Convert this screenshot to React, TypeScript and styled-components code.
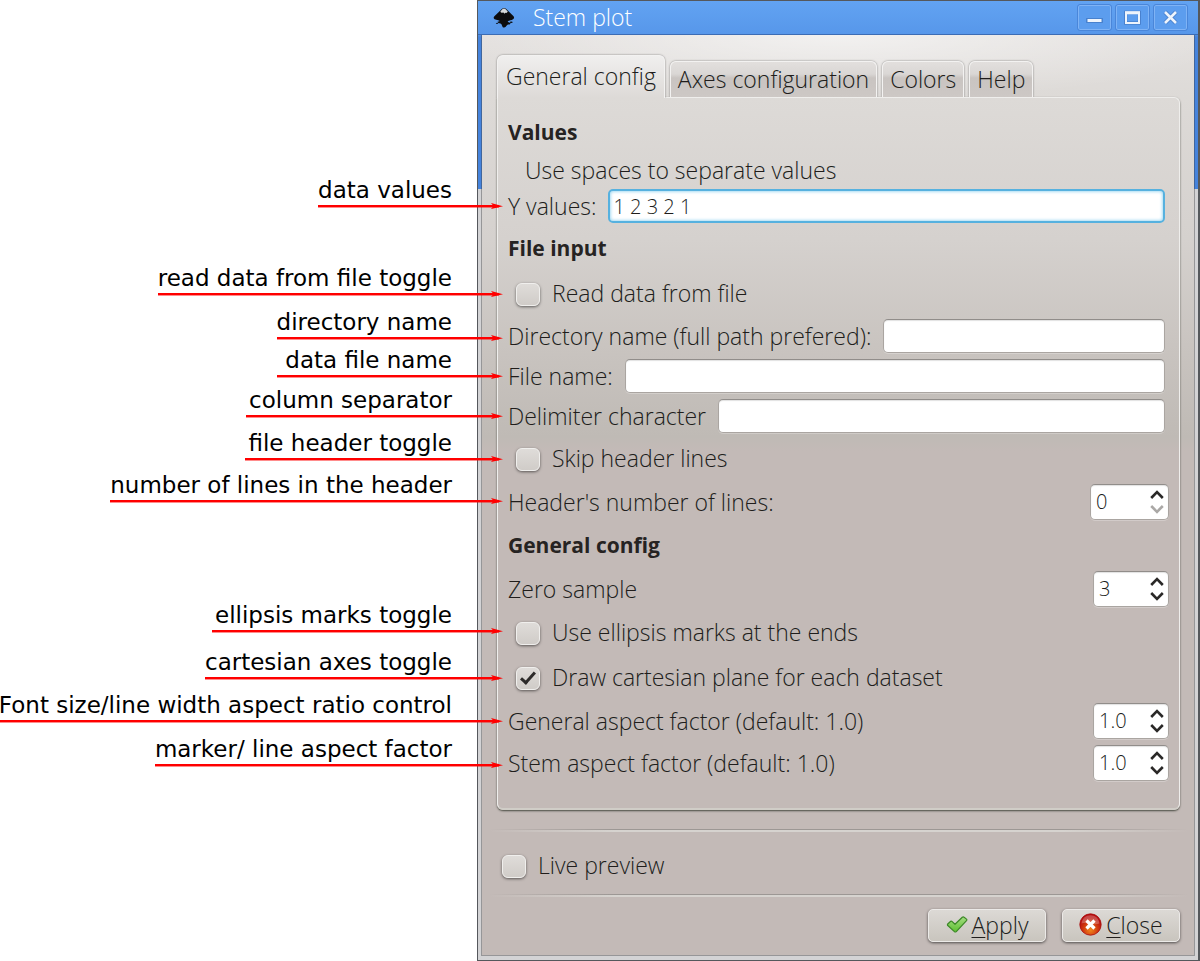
import React from "react";
import styled, { createGlobalStyle, css } from "styled-components";

const GlobalStyle = createGlobalStyle`
  *, *::before, *::after { box-sizing: border-box; }
  body { margin: 0; background: #fff; }
  button, input { font: inherit; color: inherit; }
`;

const uiFont = `"Open Sans", "Noto Sans", sans-serif`;

/* ---------- page ---------- */

const Page = styled.main`
  display: grid;
  grid-template-columns: minmax(0, 477fr) minmax(0, 723fr);
  align-items: start;
`;

/* ---------- callouts ---------- */

const Callouts = styled.ul`
  position: relative;
  z-index: 1;
  display: flex;
  flex-direction: column;
  align-items: flex-end;
  margin: 0 -26px 0 0;
  padding: 177px 0 0;
  list-style: none;
  pointer-events: none;
`;

const Callout = styled.li<{ $before: number }>`
  display: flex;
  flex-direction: column;
  margin-top: ${(p) => p.$before}px;
  font: 23px/26px "DejaVu Sans", sans-serif;
  color: #000;
  white-space: nowrap;
`;

const CalloutText = styled.span<{ $lead: number }>`
  padding: 0 51px 0 ${(p) => p.$lead}px;
`;

const ArrowLine = styled.span`
  display: flex;
  align-items: center;
  height: 6px;

  &::before {
    content: "";
    flex: 1;
    height: 2px;
    margin-right: -8px;
    background: #f00;
    box-shadow: 0 1px 0 rgba(255, 0, 0, 0.45);
  }
`;

/* ---------- window ---------- */

const Window = styled.section`
  border: 1px solid #55585c;
  border-right-width: 2px;
  padding: 0 3px 4px;
  background: linear-gradient(#62a3f2 0, #5797ea 33px, #4583dc 36px, #4583dc 188px, #d3d3d5 188px);
  font: 300 23px/26px ${uiFont};
  color: #201d1b;
`;

const TitleBar = styled.header`
  display: flex;
  align-items: center;
  gap: 5px;
  height: 34px;
  padding: 0 11px 0 15px;
  border-bottom: 1px solid #3c6cb4;
  margin: 0 -3px;
  color: #fff;
`;

const Title = styled.h1`
  flex: 1;
  margin: 0;
  padding: 0 0 2px 13px;
  font-size: 23px;
  font-weight: 300;
  line-height: 26px;
`;

const WindowButton = styled.button`
  display: grid;
  place-items: center;
  width: 33px;
  height: 25px;
  padding: 0;
  border: 1px solid #7fb3f5;
  border-radius: 2px;
  outline: 1px solid #4a86d9;
  background: #5c9dee;
  color: #eef4fc;
`;

const Body = styled.div`
  padding: 20px 14px 13px 15px;
  border: solid rgba(60, 60, 60, 0.4);
  border-width: 0 1px 1px;
  background:
    radial-gradient(ellipse 400px 66px at 50% 0, rgba(255, 255, 255, 0.55), rgba(255, 255, 255, 0)),
    linear-gradient(#e3e0de 0, #dddad7 62px, #d5d1ce 205px, #c9c4c0 310px, #bfbab5 402px, #c3bab7 416px);
  background-clip: padding-box;
`;

/* ---------- tabs ---------- */

const TabList = styled.div`
  position: relative;
  display: flex;
  align-items: flex-end;
  gap: 5px;
  height: 42px;
`;

const Tab = styled.button<{ $active?: boolean }>`
  flex: none;
  height: 36px;
  padding: 0 7px;
  border: 1px solid #f3f2f1;
  border-bottom: 0;
  border-radius: 6px 6px 0 0;
  background: linear-gradient(#e2dfdd, #dad7d5 12px, #c9c4c1 16px, #cdc8c5);
  box-shadow: 0 0 2px rgba(0, 0, 0, 0.5);
  clip-path: inset(-3px -3px 0 -3px);
  line-height: 33px;
  white-space: nowrap;

  ${(p) =>
    p.$active &&
    css`
      height: 43px;
      margin-bottom: -1px;
      padding: 0 8px 1px;
      background: linear-gradient(#f0efee, #dddad7);
      z-index: 1;
    `}
`;

const Panel = styled.div`
  display: flex;
  flex-direction: column;
  gap: 6px;
  padding: 15px 10px 27px;
  border: 1px solid #efeeec;
  border-bottom: 2px solid #d0cdc7;
  border-radius: 0 6px 6px 6px;
  box-shadow: 0 1px 2px rgba(40, 45, 35, 0.8);
`;

/* ---------- form ---------- */

const Heading = styled.h2`
  margin: 0;
  font-size: 21px;
  font-weight: 700;
  line-height: 39px;
  color: #262322;
`;

const Hint = styled.p`
  margin: 0;
  padding-left: 17px;
  line-height: 25px;
`;

const CheckRow = styled.label<{ $inset?: boolean }>`
  display: flex;
  align-items: center;
  gap: 12px;
  height: ${(p) => (p.$inset ? 39 : 62)}px;
  padding: ${(p) => (p.$inset ? "0 0 2px 8px" : "4px 0 0 5px")};
`;

const CheckBox = styled.input.attrs({ type: "checkbox" })`
  appearance: none;
  flex: none;
  display: grid;
  place-items: center;
  width: 24px;
  height: 23px;
  margin: 3px 0 0;
  border: 1px solid #f0efed;
  border-radius: 6px;
  background: linear-gradient(#dfdcd9, #d0ccc8);
  box-shadow: 0 1px 3px rgba(0, 0, 0, 0.55);

  &:checked::after {
    content: "";
    width: 8px;
    height: 15px;
    margin-top: -4px;
    border: solid #2d2b2a;
    border-width: 0 3px 3px 0;
    transform: rotate(42deg);
  }
`;

const FieldRow = styled.label`
  display: flex;
  align-items: center;
  justify-content: space-between;
  gap: 12px;
  white-space: nowrap;
`;

const fieldBox = css`
  border: 1px solid #aaa5a1;
  border-top-color: #918d8a;
  border-radius: 5px;
  background: #fff;
  box-shadow: inset 0 1px 1px rgba(0, 0, 0, 0.12), 0 1px 0 rgba(255, 255, 255, 0.25);
`;

const TextInput = styled.input.attrs({ type: "text" })<{ $focused?: boolean }>`
  ${fieldBox}
  flex: 1;
  min-width: 0;
  height: 34px;
  margin-right: 4px;
  padding: 0 3px;
  font-size: 20px;
  outline: 0;

  ${(p) =>
    p.$focused &&
    css`
      border: 2px solid #56b1df;
      box-shadow: inset 0 0 3px 1px #a9dcf3;
    `}
`;

const Spinner = styled.span<{ $wide?: boolean }>`
  ${fieldBox}
  display: flex;
  flex: none;
  width: ${(p) => (p.$wide ? 79 : 76)}px;
  height: 36px;
`;

const SpinInput = styled.input.attrs({ type: "number" })`
  appearance: textfield;
  flex: 1;
  min-width: 0;
  padding: 0 0 0 5px;
  border: 0;
  outline: 0;
  background: none;
  font-size: 20px;

  &::-webkit-inner-spin-button { appearance: none; }
`;

const SpinArrows = styled.span`
  display: flex;
  flex-direction: column;
  justify-content: center;
  gap: 4px;
  padding-right: 4px;
`;

const SpinButton = styled.button`
  display: block;
  padding: 0;
  border: 0;
  background: none;
  line-height: 0;
  color: #2a2827;

  &:disabled { color: #aaa8a6; }
`;

/* ---------- footer ---------- */

const Rule = styled.hr<{ $gap?: boolean }>`
  width: auto;
  height: 3px;
  margin: ${(p) => (p.$gap ? 19 : 0)}px -8px 0;
  border: 0;
  background:
    linear-gradient(90deg, transparent, #9c9794 18%, #9c9794 82%, transparent) 0 0 / 100% 1px no-repeat,
    linear-gradient(90deg, transparent, #d6d3cf 18%, #d6d3cf 82%, transparent) 0 1px / 100% 2px no-repeat;
`;

const Actions = styled.footer`
  display: flex;
  justify-content: flex-end;
  gap: 16px;
  margin-top: 12px;
`;

const ActionButton = styled.button`
  display: flex;
  align-items: center;
  justify-content: center;
  gap: 4px;
  width: 118px;
  height: 33px;
  padding: 0 0 2px;
  border: 1px solid #eceae8;
  border-radius: 5px;
  background: linear-gradient(#dcd9d5, #c9c5be);
  box-shadow: 0 1px 3px rgba(0, 0, 0, 0.6);
`;

const AccessKey = styled.span`
  text-decoration: underline;
  text-decoration-thickness: 1px;
  text-underline-offset: 3px;
`;

/* ---------- icons ---------- */

const InkscapeIcon = () => (
  <svg width="22" height="22" viewBox="0 0 22 22" aria-hidden="true">
    <path
      d="M11 1C9.6 1 8.700 2 7.600 3.200L1.400 9.200C.2 10.600.5 11.900 2.400 12.500L6 13.500C7 13.900 6.400 14.500 5 14.600C4 14.900 4.800 15.900 6.400 16.200C8 16.500 8.700 17.300 9.100 18.700C9.500 20.600 11.300 21.200 12.800 19.800C13.400 19 14 17.900 15.400 17.600C17.100 17.300 18 16.700 17.200 16C16.300 15.300 14 15 14.900 14.200C16 13.500 18.600 13.400 20 12.300C21.500 11.300 21.300 10.200 20.300 9.100L14.300 3.100C13.300 2 12.500 1 11 1Z"
      fill="#0c0c0e"
    />
    <path d="M11 1.600C9.800 1.600 9 2.600 7.300 4.700C7.900 5.700 8.600 5.200 9.100 6.100C10 5.300 10.700 5.500 11.400 6.700C12.200 5.500 13 5.900 13.600 5.900C14.100 5.300 14.500 5.200 14.800 4.600C13 2.600 12.200 1.600 11 1.600Z" fill="#d7d9db" />
    <ellipse cx="18.200" cy="15.300" rx="1.500" ry=".8" fill="#0c0c0e" />
    <ellipse cx="4.100" cy="16.400" rx="1.200" ry=".6" fill="#1b2a44" />
  </svg>
);

const MinimizeIcon = () => (
  <svg width="17" height="15" viewBox="0 0 17 15" aria-hidden="true">
    <path d="M1 10.500H16" stroke="#3566ad" strokeWidth="5" strokeLinecap="round" opacity=".5" />
    <path d="M1.500 10.500H15.500" stroke="currentColor" strokeWidth="3" />
  </svg>
);

const MaximizeIcon = () => (
  <svg width="17" height="15" viewBox="0 0 17 15" fill="none" aria-hidden="true">
    <rect x="1.500" y="2.500" width="14" height="10.500" stroke="#3566ad" strokeWidth="3.500" opacity=".5" />
    <path d="M1 2.800H16" stroke="currentColor" strokeWidth="3" />
    <rect x="2" y="2.500" width="13" height="10.500" stroke="currentColor" strokeWidth="2" />
  </svg>
);

const CloseWindowIcon = () => (
  <svg width="17" height="15" viewBox="0 0 17 15" fill="none" aria-hidden="true">
    <path d="M3 2L14 13M14 2L3 13" stroke="#3566ad" strokeWidth="4.500" opacity=".5" />
    <path d="M3 2L14 13M14 2L3 13" stroke="currentColor" strokeWidth="2.600" />
  </svg>
);

const ApplyIcon = () => (
  <svg width="22" height="20" viewBox="0 0 22 20" aria-hidden="true">
    <defs>
      <linearGradient id="applyFill" x1="0" y1="0" x2="0" y2="1">
        <stop offset="0" stopColor="#a5dc84" />
        <stop offset="1" stopColor="#5cc02f" />
      </linearGradient>
    </defs>
    <path
      d="M1.500 9.300L4.700 6.200Q5.500 5.900 6.200 6.600L9 9.300L16.300 2.200Q17.300 1.500 18.100 2.300L20.800 4.400Q21 5.100 20.500 5.700L10.300 16.600Q9.300 17.400 8.400 16.600L1.500 10.200Z"
      fill="url(#applyFill)"
      stroke="#3c8727"
      strokeWidth="1.200"
      strokeLinejoin="round"
    />
  </svg>
);

const CloseIcon = () => (
  <svg width="23" height="23" viewBox="0 0 23 23" aria-hidden="true">
    <defs>
      <radialGradient id="closeFill" cx=".5" cy=".75" r=".6">
        <stop offset="0" stopColor="#f08a1c" />
        <stop offset=".55" stopColor="#d23c10" />
        <stop offset="1" stopColor="#b50d0d" />
      </radialGradient>
    </defs>
    <circle cx="11.500" cy="11.500" r="10.700" fill="url(#closeFill)" stroke="#a80f10" strokeWidth=".8" />
    <path d="M2.600 10.500C3 5 7 2.200 11.500 2.200S20 5 20.400 10.500C14 12.500 8 9 2.600 10.500Z" fill="#fff" opacity=".25" />
    <path d="M7.500 7.500L15.500 15.500M15.500 7.500L7.500 15.500" stroke="#fff" strokeWidth="3.200" />
  </svg>
);

const ArrowHead = () => (
  <svg width="12" height="6" viewBox="0 0 12 6" aria-hidden="true">
    <path d="M0 0L12 3.200L0 6L2.500 3Z" fill="#f00" />
  </svg>
);

const Chevron = ({ down }: { down?: boolean }) => (
  <svg width="14" height="10" viewBox="0 0 14 10" fill="none" aria-hidden="true">
    <path d={down ? "M1.200 2L7 7.800L12.800 2" : "M1.200 8L7 2.200L12.800 8"} stroke="currentColor" strokeWidth="2.600" />
  </svg>
);

/* ---------- composed fields ---------- */

const SpinField = ({ label, value, step, wide, min }: { label: string; value: string; step?: string; wide?: boolean; min?: boolean }) => (
  <FieldRow>
    {label}
    <Spinner $wide={wide}>
      <SpinInput defaultValue={value} step={step} aria-label={label} />
      <SpinArrows>
        <SpinButton type="button" aria-label="Increase"><Chevron /></SpinButton>
        <SpinButton type="button" aria-label="Decrease" disabled={min}><Chevron down /></SpinButton>
      </SpinArrows>
    </Spinner>
  </FieldRow>
);

const TextField = ({ label, value, focused }: { label: string; value?: string; focused?: boolean }) => (
  <FieldRow>
    {label}
    <TextInput defaultValue={value} $focused={focused} />
  </FieldRow>
);

const CheckField = ({ label, checked, inset }: { label: string; checked?: boolean; inset?: boolean }) => (
  <CheckRow $inset={inset}>
    <CheckBox defaultChecked={checked} />
    {label}
  </CheckRow>
);

const callouts = [
  { text: "data values", before: 0, lead: 0 },
  { text: "read data from file toggle", before: 56, lead: 0 },
  { text: "directory name", before: 12, lead: 0 },
  { text: "data file name", before: 6, lead: 8 },
  { text: "column separator", before: 8, lead: 3 },
  { text: "file header toggle", before: 11, lead: 3 },
  { text: "number of lines in the header", before: 10, lead: 0 },
  { text: "ellipsis marks toggle", before: 98, lead: 3 },
  { text: "cartesian axes toggle", before: 15, lead: 0 },
  { text: "Font size/line width aspect ratio control", before: 11, lead: 0 },
  { text: "marker/ line aspect factor", before: 12, lead: 0 },
];

export default function App() {
  return (
    <>
      <GlobalStyle />
      <Page>
        <Callouts>
          {callouts.map((c) => (
            <Callout key={c.text} $before={c.before}>
              <CalloutText $lead={c.lead}>{c.text}</CalloutText>
              <ArrowLine><ArrowHead /></ArrowLine>
            </Callout>
          ))}
        </Callouts>

        <Window aria-label="Stem plot">
          <TitleBar>
            <InkscapeIcon />
            <Title>Stem plot</Title>
            <WindowButton type="button" aria-label="Minimize"><MinimizeIcon /></WindowButton>
            <WindowButton type="button" aria-label="Maximize"><MaximizeIcon /></WindowButton>
            <WindowButton type="button" aria-label="Close window"><CloseWindowIcon /></WindowButton>
          </TitleBar>

          <Body>
            <TabList role="tablist">
              <Tab type="button" role="tab" aria-selected $active>General config</Tab>
              <Tab type="button" role="tab">Axes configuration</Tab>
              <Tab type="button" role="tab">Colors</Tab>
              <Tab type="button" role="tab">Help</Tab>
            </TabList>

            <Panel role="tabpanel">
              <Heading>Values</Heading>
              <Hint>Use spaces to separate values</Hint>
              <TextField label="Y values:" value="1 2 3 2 1" focused />
              <Heading>File input</Heading>
              <CheckField label="Read data from file" inset />
              <TextField label="Directory name (full path prefered):" />
              <TextField label="File name:" />
              <TextField label="Delimiter character" />
              <CheckField label="Skip header lines" inset />
              <SpinField label="Header's number of lines:" value="0" wide min />
              <Heading>General config</Heading>
              <SpinField label="Zero sample" value="3" />
              <CheckField label="Use ellipsis marks at the ends" inset />
              <CheckField label="Draw cartesian plane for each dataset" checked inset />
              <SpinField label="General aspect factor (default: 1.0)" value="1.0" step="0.1" />
              <SpinField label="Stem aspect factor (default: 1.0)" value="1.0" step="0.1" />
            </Panel>

            <Rule $gap />
            <CheckField label="Live preview" />
            <Rule />
            <Actions>
              <ActionButton type="button"><ApplyIcon /><span><AccessKey>A</AccessKey>pply</span></ActionButton>
              <ActionButton type="button"><CloseIcon /><span><AccessKey>C</AccessKey>lose</span></ActionButton>
            </Actions>
          </Body>
        </Window>
      </Page>
    </>
  );
}
